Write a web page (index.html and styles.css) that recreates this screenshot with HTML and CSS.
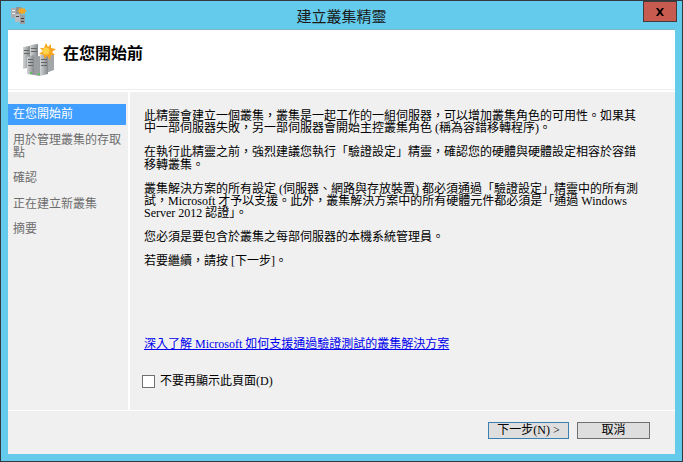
FILE: index.html
```html
<!DOCTYPE html>
<html lang="zh-Hant">
<head>
<meta charset="utf-8">
<title>建立叢集精靈</title>
<link rel="stylesheet" href="styles.css">
</head>
<body>
<div class="window">
  <div class="titlebar">
    <svg class="app-icon" width="18" height="18" viewBox="0 0 18 18">
      <rect x="1" y="2" width="5" height="10" fill="#a9adb0"/>
      <rect x="6" y="1" width="5" height="9" fill="#8e9396"/>
      <rect x="2" y="4" width="3" height="1" fill="#eee"/>
      <rect x="2" y="7" width="3" height="1" fill="#eee"/>
      <rect x="5" y="8" width="5" height="8" fill="#b9bcbe"/>
      <rect x="10" y="9" width="5" height="10" fill="#9a9ea1"/>
      <rect x="6" y="10" width="3" height="1" fill="#444"/>
      <rect x="11" y="12" width="3" height="1" fill="#444"/>
      <rect x="11" y="15" width="3" height="1" fill="#444"/>
      <path d="M12 1l1 2 2-1 0 2 2 1-2 1 0 2-2-1-1 2-1-2-2 1 0-2-2-1 2-1 0-2 2 1z" fill="#f5a623"/>
    </svg>
    <div class="title">建立叢集精靈</div>
    <div class="close"><svg width="10" height="8" viewBox="0 0 10 8"><path d="M1 0h2l2 2.5L7 0h2L6.2 4 9 8H7L5 5.500 3 8H1l2.800-4z" fill="#000"/></svg></div>
  </div>
  <div class="client">
    <header class="banner">
      <svg class="banner-icon" width="34" height="34" viewBox="0 0 34 34">
        <defs>
          <linearGradient id="srv" x1="0" y1="0" x2="1" y2="0">
            <stop offset="0" stop-color="#d2d4d5"/>
            <stop offset="1" stop-color="#85898c"/>
          </linearGradient>
        </defs>
        <path d="M1 4l7-1v21l-7 2z" fill="url(#srv)"/>
        <path d="M8 2l8-1v18l-8 2z" fill="url(#srv)"/>
        <path d="M24 8l8 3v16l-8 3z" fill="#a3a6a8"/>
        <path d="M5 14l7-2v20l-7-1z" fill="url(#srv)"/>
        <path d="M12 14l6-1v20l-6-1z" fill="#9b9ea0"/>
        <path d="M18 12l8-1v20l-8 2z" fill="url(#srv)"/>
        <g fill="#666">
          <rect x="2" y="7" width="5" height="1"/><rect x="2" y="10" width="5" height="1"/><rect x="9" y="5" width="6" height="1"/><rect x="9" y="8" width="6" height="1"/>
          <rect x="6" y="16" width="5" height="1"/><rect x="6" y="19" width="5" height="1"/><rect x="6" y="22" width="5" height="1"/>
          <rect x="19" y="16" width="6" height="1"/><rect x="19" y="19" width="6" height="1"/><rect x="19" y="22" width="6" height="1"/>
        </g>
        <rect x="8" y="29" width="2" height="2" fill="#5cc15c"/><rect x="16" y="30" width="2" height="2" fill="#5cc15c"/>
        <path d="M24 0l2 4 3-3 0 4 5 1-4 3 3 3-4 0-1 5-3-4-3 3 0-4-5-1 4-3-3-3 4 0z" fill="#f7a51e"/>
        <circle cx="24" cy="8" r="3.500" fill="#ffd24a"/>
      </svg>
      <h1 class="banner-title">在您開始前</h1>
    </header>
    <div class="main">
      <nav class="sidebar">
        <div class="step current">在您開始前</div>
        <div class="step">用於管理叢集的存取點</div>
        <div class="step">確認</div>
        <div class="step">正在建立新叢集</div>
        <div class="step">摘要</div>
      </nav>
      <section class="content">
        <div class="text">
          <p>此精靈會建立一個叢集，叢集是一起工作的一組伺服器，可以增加叢集角色的可用性。如果其中一部伺服器失敗，另一部伺服器會開始主控叢集角色 (稱為容錯移轉程序)。</p>
          <p>在執行此精靈之前，強烈建議您執行「驗證設定」精靈，確認您的硬體與硬體設定相容於容錯移轉叢集。</p>
          <p>叢集解決方案的所有設定 (伺服器、網路與存放裝置) 都必須通過「驗證設定」精靈中的所有測試，Microsoft 才予以支援。此外，叢集解決方案中的所有硬體元件都必須是「通過 Windows Server 2012 認證」。</p>
          <p>您必須是要包含於叢集之每部伺服器的本機系統管理員。</p>
          <p>若要繼續，請按 [下一步]。</p>
        </div>
        <a class="link" href="#">深入了解 Microsoft 如何支援通過驗證測試的叢集解決方案</a>
        <label class="check"><span class="box"></span>不要再顯示此頁面(D)</label>
      </section>
    </div>
    <footer class="footer">
      <button class="btn next">下一步(N) &gt;</button>
      <button class="btn cancel">取消</button>
    </footer>
  </div>
</div>
</body>
</html>
```
FILE: styles.css
```css
* { box-sizing: border-box; }
html, body { margin: 0; padding: 0; }
body {
  width: 683px;
  height: 462px;
  overflow: hidden;
  font-family: "Liberation Serif", "Noto Sans CJK TC", serif;
  font-size: 12px;
  color: #000;
}
.window {
  width: 683px;
  height: 462px;
  display: flex;
  flex-direction: column;
  background: #64cbec;
  border: 1px solid #333a3f;
  padding: 0 7px 7px;
}
.titlebar {
  height: 29px;
  flex: none;
  display: flex;
  align-items: center;
  position: relative;
}
.app-icon { flex: none; margin: -2px 0 0 2px; }
.title {
  position: absolute;
  left: 0;
  right: 0;
  top: 7px;
  text-align: center;
  font-size: 15px;
  line-height: 18px;
  color: #1a1a1a;
}
.close {
  position: absolute;
  top: 0;
  right: -2px;
  width: 34px;
  height: 21px;
  background: #c75b50;
  border: 1px solid #44393a;
  display: flex;
  align-items: center;
  justify-content: center;
}
.client {
  flex: 1;
  min-height: 0;
  display: flex;
  flex-direction: column;
  background: #fff;
  box-shadow: 0 -1px 0 #7fb4c9;
}
.banner {
  height: 60px;
  flex: none;
  display: flex;
  align-items: center;
  background: #fff;
  border-bottom: 1px solid #eeeeee;
  padding-left: 14px;
  gap: 7px;
}
.banner-icon { flex: none; margin-top: 0; }
.banner-title {
  margin: 0 0 12px;
  font-size: 16px;
  font-weight: 700;
  line-height: 20px;
}
.main {
  flex: 1;
  min-height: 0;
  display: flex;
  gap: 2px;
  margin-top: 2px;
}
.sidebar {
  width: 120px;
  flex: none;
  background: #f0f0f0;
  padding-top: 12px;
}
.step {
  width: 118px;
  padding: 4px 5px;
  margin-bottom: 5px;
  color: #6d6d6d;
  line-height: 12.500px;
}
.step.current {
  height: 21px;
  background: #3f9eff;
  color: #fff;
}
.content {
  flex: 1;
  min-width: 0;
  background: #f0f0f0;
  padding: 18px 14px 0;
}
.text { width: 500px; height: 226px; }
.text p { margin: 0 0 11.500px; line-height: 12.400px; }
.link {
  display: block;
  color: #0000ee;
  text-decoration: underline;
  line-height: 16px;
}
.check {
  display: flex;
  align-items: center;
  gap: 5px;
  margin: 22px 0 0 -2px;
  line-height: 14px;
  height: 14px;
}
.box {
  width: 13px;
  height: 13px;
  background: #fff;
  border: 1px solid #707070;
  flex: none;
}
.footer {
  height: 43px;
  flex: none;
  background: #f0f0f0;
  margin-top: 1px;
  display: flex;
  justify-content: flex-end;
  gap: 8px;
  padding: 11px 25px 0 0;
}
.btn {
  height: 17px;
  padding: 0;
  background: #dedede;
  border: 1px solid #707070;
  font: 12px/15px "Liberation Serif", "Noto Sans CJK TC", serif;
  color: #000;
}
.next { width: 81px; border-color: #3c7fb1; }
.cancel { width: 73px; }
```
